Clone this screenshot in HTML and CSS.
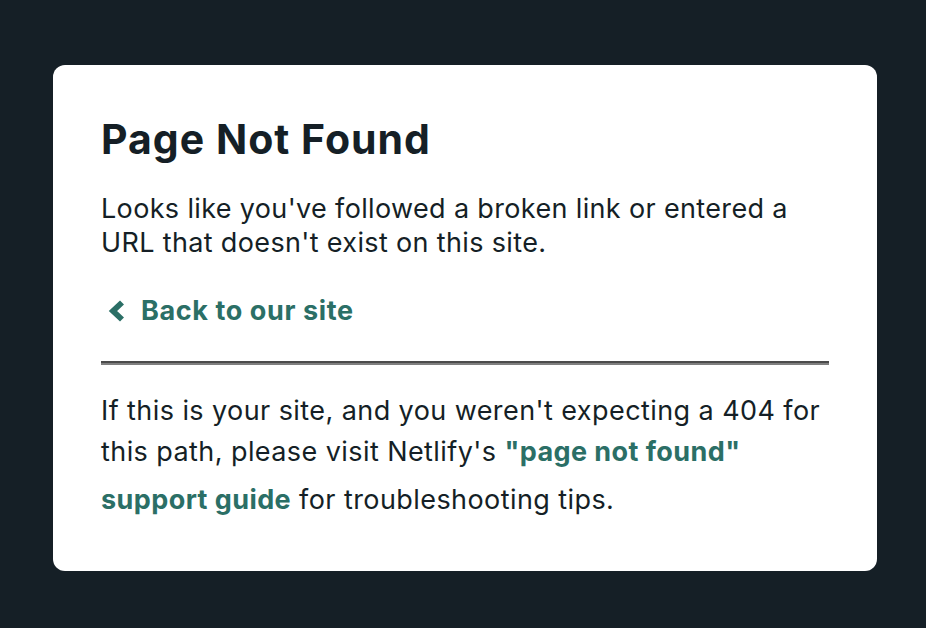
FILE: index.html
```html
<!DOCTYPE html>
<html lang="en">
<head>
<meta charset="utf-8">
<title>Page Not Found</title>
<link rel="stylesheet" href="styles.css">
</head>
<body>
<main class="card">
  <h1 class="title">Page Not Found</h1>
  <p class="lead">Looks like you've followed a broken link or entered a URL that doesn't exist on this site.</p>
  <a class="back" href="#"><svg class="chev" width="17" height="24" viewBox="0 0 17 24"><polyline points="14,3.5 5,12 14,20.5" fill="none" stroke="currentColor" stroke-width="5.8"/></svg><span>Back to our site</span></a>
  <hr class="rule">
  <p class="note">If this is your site, and you weren't expecting a 404 for this path, please visit Netlify's <a class="link" href="#">"page not found" support guide</a> for troubleshooting tips.</p>
</main>
</body>
</html>
```
FILE: styles.css
```css
html, body {
  margin: 0;
  padding: 0;
}
body {
  background: #151f26;
  font-family: Inter, "Noto Sans", sans-serif;
  color: #151f26;
  padding: 65px 0 0 53px;
  height: 628px;
  box-sizing: border-box;
}
.card {
  width: 824px;
  height: 506px;
  box-sizing: border-box;
  background: #ffffff;
  border-radius: 12px;
  padding: 48px 48px 0 48px;
}
.title {
  margin: 0;
  font-size: 41px;
  line-height: 52px;
  font-weight: 700;
  letter-spacing: 1px;
}
.lead {
  margin: 27px 0 0 0;
  font-size: 27px;
  line-height: 34px;
  letter-spacing: 0.35px;
}
.back {
  display: flex;
  align-items: center;
  gap: 16px;
  margin-top: 34px;
  color: #2b6f66;
  font-weight: 700;
  font-size: 27px;
  line-height: 34px;
  letter-spacing: 0.6px;
  text-decoration: none;
  padding-left: 7px;
}
.chev {
  flex: none;
}
.rule {
  margin: 33px 0 0 0;
  border: 0;
  border-top: 2px solid #4b4b4b;
  border-bottom: 2px solid #7f7f7f;
  height: 0;
}
.note {
  margin: 29px 0 0 0;
  font-size: 27px;
  line-height: 34px;
  letter-spacing: 0.42px;
}
.link {
  color: #2b6f66;
  font-weight: 700;
  line-height: 48px;
  text-decoration: none;
}
```
